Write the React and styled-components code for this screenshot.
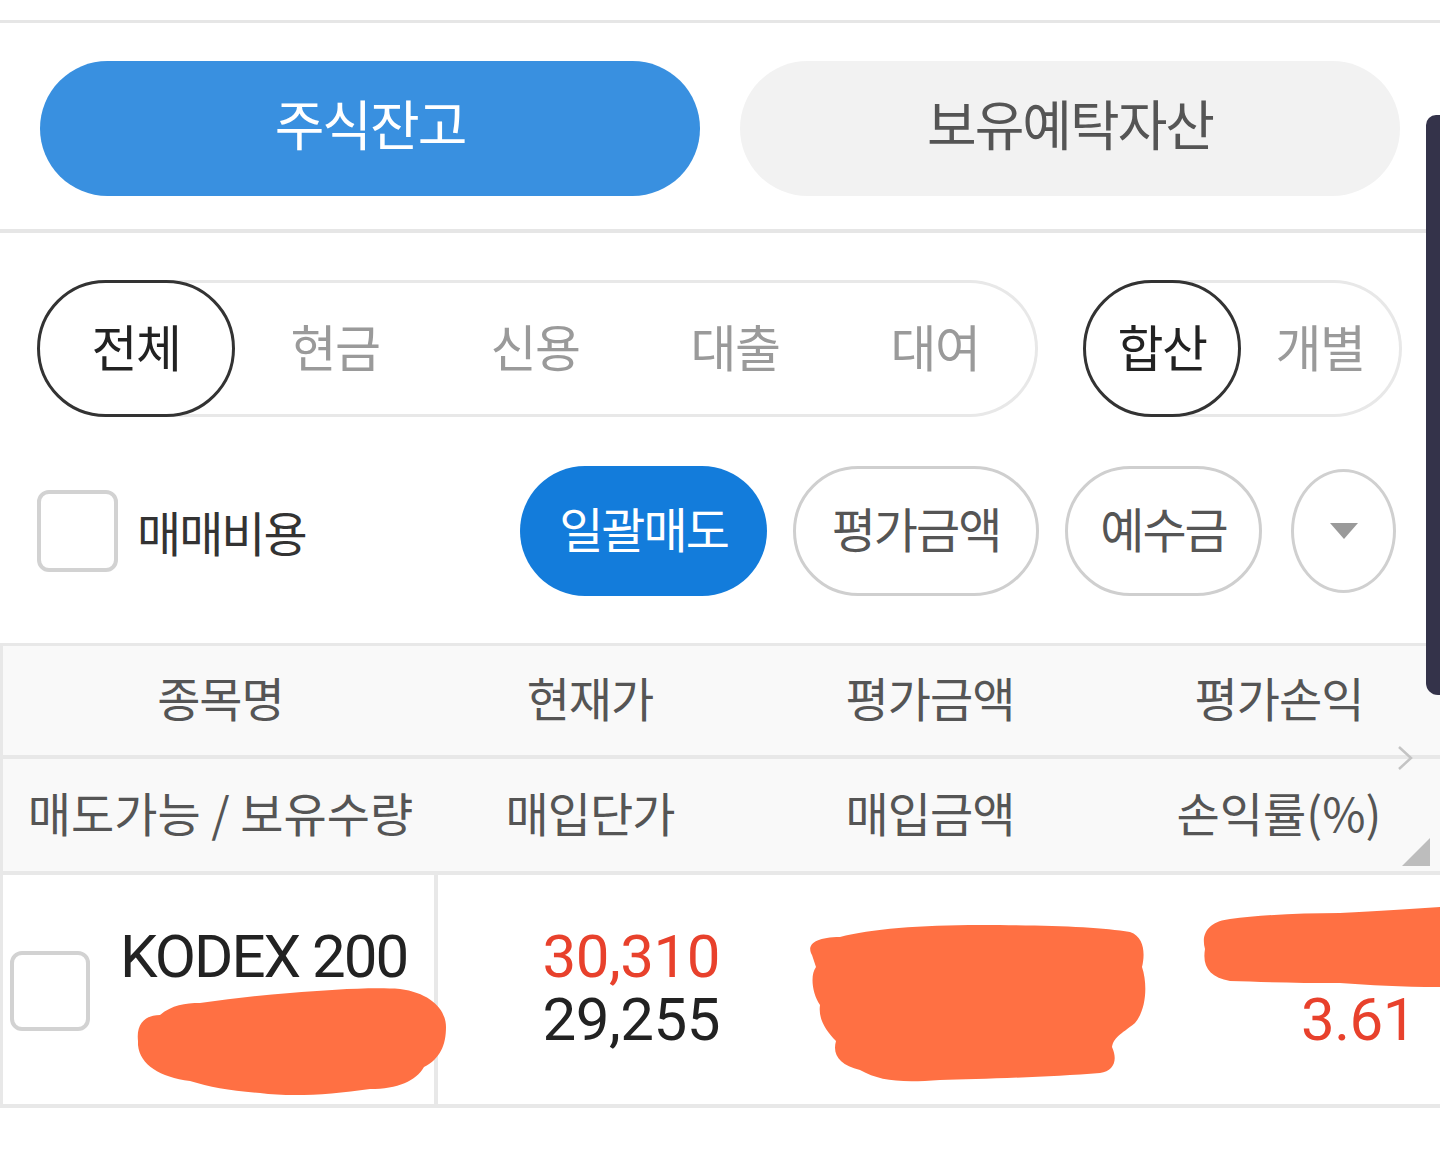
import React, { useState } from "react";
import styled, { createGlobalStyle } from "styled-components";

const GlobalStyle = createGlobalStyle`
  html, body {
    margin: 0;
    padding: 0;
    background: #fff;
  }
  body {
    font-family: "Noto Sans CJK KR", "Noto Sans", sans-serif;
    color: #333;
  }
  * { box-sizing: border-box; }
`;

const categories = ["전체", "현금", "신용", "대출", "대여"];
const modes = ["합산", "개별"];

export default function App() {
  const [tab, setTab] = useState(0);
  const [category, setCategory] = useState(0);
  const [mode, setMode] = useState(0);

  return (
    <Page>
      <GlobalStyle />
      <Scrollbar />
      <TabBar>
        <Tab $active={tab === 0} onClick={() => setTab(0)}>
          주식잔고
        </Tab>
        <Tab $active={tab === 1} onClick={() => setTab(1)}>
          보유예탁자산
        </Tab>
      </TabBar>

      <FilterRow>
        <Segment>
          {categories.map((c, i) => (
            <SegItem
              key={c}
              $active={category === i}
              $width={i === 0 ? 198 : 200}
              onClick={() => setCategory(i)}
            >
              {c}
            </SegItem>
          ))}
        </Segment>
        <Segment>
          {modes.map((m, i) => (
            <SegItem
              key={m}
              $active={mode === i}
              $width={158}
              onClick={() => setMode(i)}
            >
              {m}
            </SegItem>
          ))}
        </Segment>
      </FilterRow>

      <ActionRow>
        <CheckLabel>
          <CheckBox />
          매매비용
        </CheckLabel>
        <Actions>
          <ActionButton $primary $width={247}>
            일괄매도
          </ActionButton>
          <ActionButton $width={246}>평가금액</ActionButton>
          <ActionButton $width={197}>예수금</ActionButton>
          <DropButton>
            <svg width="32" height="20" viewBox="0 0 32 20">
              <path d="M2 2 L30 2 L16 18 Z" fill="#9a9a9a" />
            </svg>
          </DropButton>
        </Actions>
      </ActionRow>

      <Table>
        <HeadRow>
          <HeadCell>종목명</HeadCell>
          <HeadCell>현재가</HeadCell>
          <HeadCell>평가금액</HeadCell>
          <HeadCell>평가손익</HeadCell>
          <Chevron viewBox="0 0 16 26">
            <path d="M2 2 L14 13 L2 24" fill="none" stroke="#c4c4c4" strokeWidth="2.5" />
          </Chevron>
        </HeadRow>
        <HeadRow $second>
          <HeadCell $wide>매도가능 / 보유수량</HeadCell>
          <HeadCell>매입단가</HeadCell>
          <HeadCell>매입금액</HeadCell>
          <HeadCell $wide>손익률(%)</HeadCell>
          <Corner viewBox="0 0 28 28">
            <path d="M28 0 L28 28 L0 28 Z" fill="#bdbdbd" />
          </Corner>
        </HeadRow>
        <DataRow>
          <NameCell>
            <CheckBox $small />
            <StockName>KODEX 200</StockName>
          </NameCell>
          <NumCell>
            <Num $red>30,310</Num>
            <Num>29,255</Num>
          </NumCell>
          <NumCell />
          <NumCell $last>
            <Num>&nbsp;</Num>
            <Num $red>3.61</Num>
          </NumCell>
          <Redaction viewBox="0 0 1440 229" preserveAspectRatio="none">
            <path
              fill="#ff7043"
              d="M138 166 C136 148 146 140 160 140 C172 130 185 128 200 128 C230 124 260 120 290 118 C330 115 370 112 400 114 C430 118 446 134 446 152 C446 170 440 184 424 192 C416 206 398 214 370 214 C330 220 290 222 260 218 C230 216 210 212 190 206 C160 202 140 190 138 170 Z"
            />
            <path
              fill="#ff7043"
              d="M812 80 C806 70 815 62 840 62 C870 54 920 50 980 50 C1050 50 1100 52 1130 57 C1145 62 1145 80 1142 92 C1148 110 1146 135 1135 148 C1120 160 1114 162 1112 172 C1118 185 1114 196 1100 198 C1050 202 980 204 940 205 C900 208 880 206 860 195 C840 190 832 180 836 166 C826 156 818 144 820 130 C812 118 810 100 816 92 Z"
            />
            <path
              fill="#ff7043"
              d="M1205 74 C1200 56 1212 46 1230 44 C1260 40 1300 38 1340 38 C1380 36 1410 34 1440 32 L1440 112 C1400 112 1370 110 1340 108 C1300 108 1260 107 1230 106 C1210 102 1202 92 1205 74 Z"
            />
          </Redaction>
        </DataRow>
      </Table>
    </Page>
  );
}

const Page = styled.div`
  position: relative;
  width: 1440px;
  min-height: 1149px;
  padding-top: 20px;
  overflow: hidden;
`;

const Scrollbar = styled.div`
  position: absolute;
  right: 0;
  top: 115px;
  width: 14px;
  height: 580px;
  background: #34334a;
  border-radius: 10px 0 0 12px;
  z-index: 5;
`;

const TabBar = styled.div`
  display: flex;
  gap: 40px;
  padding: 38px 40px 33px;
  border-top: 3px solid #e6e6e6;
  border-bottom: 4px solid #e6e6e6;
`;

const Tab = styled.button`
  flex: 1;
  height: 135px;
  border: none;
  border-radius: 68px;
  background: ${(p) => (p.$active ? "#3990e0" : "#f2f2f2")};
  color: ${(p) => (p.$active ? "#fff" : "#555")};
  font-family: "Noto Sans CJK KR", sans-serif;
  font-size: 54px;
  font-weight: 400;
  letter-spacing: -2px;
  cursor: pointer;
  padding: 0 0 12px;
`;

const FilterRow = styled.div`
  display: flex;
  justify-content: space-between;
  padding: 47px 38px 0 37px;
`;

const Segment = styled.div`
  display: flex;
  height: 137px;
  border: 3px solid #e8e8e8;
  border-left: none;
  border-radius: 70px;
`;

const SegItem = styled.div`
  width: ${(p) => p.$width}px;
  height: 137px;
  margin: -3px 0;
  display: flex;
  align-items: center;
  justify-content: center;
  border-radius: 70px;
  border: 3px solid ${(p) => (p.$active ? "#333" : "transparent")};
  color: ${(p) => (p.$active ? "#222" : "#9a9a9a")};
  font-size: 50px;
  letter-spacing: -1.5px;
  padding-bottom: 8px;
  cursor: pointer;
`;

const ActionRow = styled.div`
  display: flex;
  align-items: center;
  justify-content: space-between;
  padding: 49px 44px 47px 37px;
`;

const CheckLabel = styled.label`
  display: flex;
  align-items: center;
  gap: 19px;
  font-size: 48px;
  color: #333;
  letter-spacing: -2px;
`;

const CheckBox = styled.span`
  display: inline-block;
  flex: none;
  width: ${(p) => (p.$small ? 80 : 81)}px;
  height: ${(p) => (p.$small ? 80 : 82)}px;
  border: 4px solid #d2d2d2;
  border-radius: 12px;
  background: #fff;
`;

const Actions = styled.div`
  display: flex;
  align-items: center;
  gap: 26px;
`;

const ActionButton = styled.button`
  width: ${(p) => p.$width}px;
  height: 130px;
  border-radius: 66px;
  border: ${(p) => (p.$primary ? "none" : "3px solid #cfcfcf")};
  background: ${(p) => (p.$primary ? "#137cdb" : "#fff")};
  color: ${(p) => (p.$primary ? "#fff" : "#555")};
  font-family: "Noto Sans CJK KR", sans-serif;
  font-size: 48px;
  letter-spacing: -2px;
  padding: 0 0 8px;
  cursor: pointer;
`;

const DropButton = styled.button`
  width: 105px;
  height: 124px;
  margin-left: 3px;
  border-radius: 50%;
  border: 3px solid #d0d0d0;
  background: #fff;
  display: flex;
  align-items: center;
  justify-content: center;
  padding: 0;
`;

const Table = styled.div`
  border-top: 3px solid #e8e8e8;
  border-left: 3px solid #e8e8e8;
`;

const columns = "435px 304px 376px 1fr";

const HeadRow = styled.div`
  position: relative;
  display: grid;
  grid-template-columns: ${columns};
  align-items: center;
  height: ${(p) => (p.$second ? 116 : 113)}px;
  background: #f9f9f9;
  border-bottom: 4px solid #e8e8e8;
`;

const HeadCell = styled.div`
  text-align: center;
  font-size: 47px;
  color: #555;
  letter-spacing: ${(p) => (p.$wide ? "0" : "-1px")};
  padding-bottom: 8px;
  white-space: nowrap;
`;

const Chevron = styled.svg`
  position: absolute;
  left: 1394px;
  bottom: -16px;
  width: 16px;
  height: 26px;
  z-index: 2;
`;

const Corner = styled.svg`
  position: absolute;
  left: 1399px;
  bottom: 5px;
  width: 28px;
  height: 28px;
`;

const DataRow = styled.div`
  position: relative;
  display: grid;
  grid-template-columns: ${columns};
  height: 233px;
  border-bottom: 4px solid #e8e8e8;
`;

const NameCell = styled.div`
  display: flex;
  align-items: flex-start;
  gap: 30px;
  padding: 50px 0 0 7px;
  border-right: 4px solid #e8e8e8;

  ${CheckBox} {
    margin-top: 26px;
  }
`;

const StockName = styled.div`
  font-family: Roboto, "Noto Sans", sans-serif;
  font-size: 60px;
  color: #222;
  letter-spacing: -2px;
  line-height: 64px;
`;

const NumCell = styled.div`
  display: flex;
  flex-direction: column;
  align-items: flex-end;
  padding: 50px ${(p) => (p.$last ? 24 : 22)}px 0 0;
`;

const Num = styled.div`
  font-family: Roboto, "Noto Sans", sans-serif;
  font-size: 60px;
  line-height: 63px;
  letter-spacing: -0.5px;
  color: ${(p) => (p.$red ? "#e8412c" : "#222")};
`;

const Redaction = styled.svg`
  position: absolute;
  left: -3px;
  top: 0;
  width: 1440px;
  height: 229px;
  pointer-events: none;
`;
